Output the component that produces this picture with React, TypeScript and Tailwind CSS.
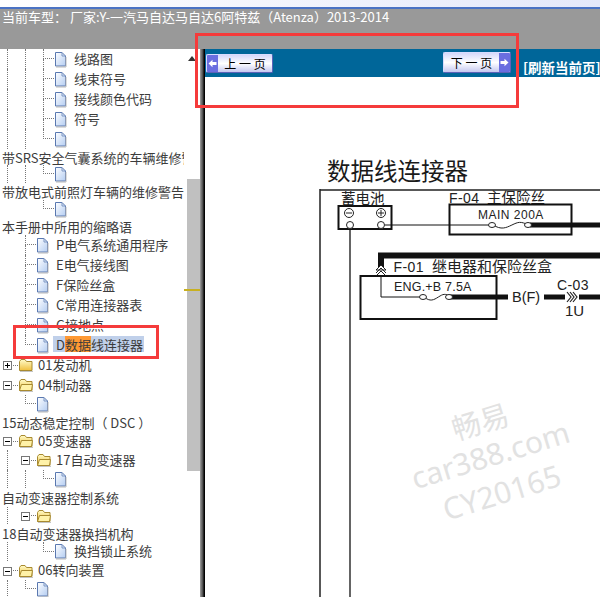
const font = { fontFamily: '"Noto Sans CJK SC", "Liberation Sans", sans-serif' };

type RowProps = {
  h: number;
  depth: number;
  guides?: number[];
  icon?: 'file' | 'closed' | 'open';
  box?: '+' | '-';
  children?: React.ReactNode;
};

function FileIcon() {
  return (
    <svg width="13" height="17" viewBox="0 0 13 17" className="shrink-0">
      <defs>
        <linearGradient id="fileFill" x1="0" y1="0" x2="1" y2="1">
          <stop offset="0" stopColor="#ffffff" />
          <stop offset="1" stopColor="#b4cdf2" />
        </linearGradient>
      </defs>
      <path d="M1.5 1.5h6.5l3.5 3.5v10h-10z" fill="url(#fileFill)" stroke="#5a78b0" strokeWidth="1" />
      <path d="M8 1.5v3.5h3.5" fill="none" stroke="#7f98c4" strokeWidth="1" />
      <path d="M2 16h10V6" fill="none" stroke="#b9b9b9" strokeWidth="1" />
    </svg>
  );
}

function FolderIcon({ open }: { open: boolean }) {
  return (
    <svg width="16" height="14" viewBox="0 0 16 14" className="shrink-0">
      <defs>
        <linearGradient id="folderFill" x1="0" y1="0" x2="0" y2="1">
          <stop offset="0" stopColor="#fffbc8" />
          <stop offset="1" stopColor="#f0c040" />
        </linearGradient>
      </defs>
      <path d="M1.5 12.5v-9l1.5-2h4l1.500 2h5.500v9z" fill="url(#folderFill)" stroke="#a88a30" strokeWidth="1" />
      {open && <path d="M1.500 12.500l2-6h11l-1 6z" fill="#fff2a8" stroke="#a88a30" strokeWidth="1" />}
      <path d="M2 13.500h13" stroke="#c4c4c4" strokeWidth="1" />
    </svg>
  );
}

function TreeRow({ h, depth, guides = [], icon = 'file', box, children }: RowProps) {
  const cells = [0, 1, 2].slice(0, depth);
  const isFolder = icon !== 'file';
  return (
    <div className="flex items-center pl-[7px] shrink-0 whitespace-nowrap" style={{ height: h }}>
      {cells.map((i) => (
        <div key={i} className={`w-[18px] h-full shrink-0 ${guides.includes(i) ? 'border-l border-dotted border-[#777]' : ''}`} />
      ))}
      {box ? (
        <div className="relative w-[11px] h-full shrink-0 flex items-center">
          <div className="w-full border-t border-dotted border-[#777]" />
          <div className="absolute left-[-4px] top-1/2 -mt-[4px] w-[9px] h-[9px] border border-[#777] bg-white flex items-center justify-center">
            <div className="w-[5px] h-px bg-black" />
            {box === '+' && <div className="absolute w-px h-[5px] bg-black" />}
          </div>
        </div>
      ) : (
        <div className="w-[11px] h-full shrink-0 flex flex-col">
          <div className="h-1/2 border-l border-b border-dotted border-[#777]" />
          {guides.includes(depth) && <div className="h-1/2 border-l border-dotted border-[#777]" />}
        </div>
      )}
      {isFolder ? <FolderIcon open={icon === 'open'} /> : <FileIcon />}
      {children && <div className={isFolder ? 'ml-[4px] -mt-[2px]' : 'ml-[7px] -mt-[2px]'}>{children}</div>}
    </div>
  );
}

function TextRow({ h, children }: { h: number; children: React.ReactNode }) {
  return (
    <div className="flex items-center pl-[2px] shrink-0 whitespace-nowrap" style={{ height: h }}>
      {children}
    </div>
  );
}

function PageButton({ dir, label }: { dir: 'prev' | 'next'; label: string }) {
  const cap = (
    <div className="w-[11px] h-full bg-[#6a6ee0] flex items-center justify-center shrink-0">
      <svg width="9" height="9" viewBox="0 0 9 9">
        {dir === 'prev' ? (
          <path d="M0.5 4.5L4.5 0.8v2.2h4v3h-4v2.2z" fill="#fff" />
        ) : (
          <path d="M8.5 4.5L4.5 0.8v2.2h-4v3h4v2.2z" fill="#fff" />
        )}
      </svg>
    </div>
  );
  return (
    <div className="h-full w-full flex border border-[#d8dcff] border-r-[#5c62b8] border-b-[#5c62b8] rounded-[2px] bg-gradient-to-b from-[#d5d8fa] via-white to-[#c5c8f0] overflow-hidden">
      {dir === 'prev' && cap}
      <div className="flex-1 flex items-center justify-center text-[12px] text-black whitespace-pre leading-none">{label}</div>
      {dir === 'next' && cap}
    </div>
  );
}

function Chevrons({ x, y }: { x: number; y: number }) {
  return (
    <g fill="none" stroke="#222" strokeWidth="1.2">
      <path d={`M${x} ${y - 5}l4 5l-4 5`} />
      <path d={`M${x + 3} ${y - 5}l4 5l-4 5`} />
      <path d={`M${x + 6} ${y - 5}l4 5l-4 5`} />
    </g>
  );
}

function Fuse({ x1, x2, y }: { x1: number; x2: number; y: number }) {
  const w = x2 - x1;
  return (
    <g fill="#fff" stroke="#222" strokeWidth="1">
      <path d={`M${x1 + 4} ${y}c${w * 0.2} 5 ${w * 0.3} 3 ${w * 0.45} 0s${w * 0.2} -4 ${w * 0.4} 0`} fill="none" />
      <ellipse cx={x1 + 3} cy={y} rx="3.5" ry="2.5" />
      <ellipse cx={x2 - 3} cy={y} rx="3.5" ry="2.5" />
    </g>
  );
}

function Diagram() {
  const t = { fontFamily: '"Liberation Sans", "Noto Sans CJK SC", sans-serif', fill: '#222' };
  return (
    <svg viewBox="205 189 395 408" width="395" height="408" className="block">
      <path d="M320 190H600M320 189V597" fill="none" stroke="#222" strokeWidth="1.5" />
      <rect x="338.5" y="206" width="53" height="23" fill="none" stroke="#111" strokeWidth="2" />
      <text x="341" y="204" fontSize="14.5" {...t}>蓄电池</text>
      <circle cx="349" cy="213" r="4.5" fill="none" stroke="#222" />
      <path d="M346 213h6" stroke="#222" />
      <circle cx="381" cy="213" r="4.5" fill="none" stroke="#222" />
      <path d="M378 213h6M381 210v6" stroke="#222" />
      <circle cx="350" cy="225" r="3.5" fill="#fff" stroke="#222" />
      <circle cx="381" cy="225" r="3.5" fill="#fff" stroke="#222" />
      <path d="M350 229V597" stroke="#111" strokeWidth="1.3" />
      <path d="M385 225H490" stroke="#111" />

      <text x="449" y="203" fontSize="14" letterSpacing="0.4" {...t}>F-04</text>
      <text x="487" y="203" fontSize="14.500" {...t}>主保险丝</text>
      <rect x="449.5" y="204.5" width="122" height="30" fill="none" stroke="#111" strokeWidth="2" />
      <text x="478" y="218.500" fontSize="12" letterSpacing="0.5" {...t}>MAIN 200A</text>
      <path d="M530 225H600" stroke="#111" strokeWidth="5" />
      <Fuse x1={489} x2={531} y={225} />

      <path d="M600 255.500H381V268" fill="none" stroke="#111" strokeWidth="6" />
      <path d="M381 265l-5 5h10zM376 273l5 -5l5 5M376 276l5 -5l5 5" fill="#fff" stroke="#222" />
      <text x="393.500" y="272" fontSize="14" letterSpacing="0.4" {...t}>F-01</text>
      <text x="432" y="272" fontSize="15" {...t}>继电器和保险丝盒</text>
      <rect x="360.500" y="276" width="136" height="43" fill="none" stroke="#111" strokeWidth="2" />
      <text x="394" y="291" fontSize="12.500" letterSpacing="0.2" {...t}>ENG.+B 7.5A</text>
      <path d="M381 277V297H421" fill="none" stroke="#111" />
      <path d="M450 297H508" stroke="#111" strokeWidth="5" />
      <Fuse x1={420} x2={452} y={297} />
      <text x="512" y="302" fontSize="14.500" {...t}>B(F)</text>
      <path d="M544 297H600" stroke="#111" strokeWidth="5" />
      <text x="557" y="290" fontSize="14" letterSpacing="0.4" {...t}>C-03</text>
      <rect x="565" y="291" width="14" height="12" fill="#fff" />
      <Chevrons x={567} y={297} />
      <text x="565" y="316" fontSize="15" {...t}>1U</text>
    </svg>
  );
}

export default function App() {
  const sel = 'bg-[#c0d0ea]';
  return (
    <div className="relative w-[600px] h-[597px] overflow-hidden bg-white text-[13px] text-[#3c3c3c] leading-none flex flex-col" style={font}>
      {/* Top strip */}
      <div className="h-[7px] bg-gradient-to-r from-white to-[#e4e8fa] shrink-0" />
      <div className="h-[2px] bg-[#4a72c4] shrink-0" />
      <div className="h-[40px] bg-[#999999] text-white pl-[2px] pt-[1px] shrink-0 whitespace-pre">
        当前车型： 厂家:Y-一汽马自达马自达6阿特兹（Atenza）2013-2014
      </div>

      <div className="flex flex-1 min-h-0">
        {/* Tree */}
        <div className="w-[184px] flex flex-col overflow-hidden shrink-0">
          <TreeRow h={20} depth={2} guides={[0, 1, 2]}>线路图</TreeRow>
          <TreeRow h={20} depth={2} guides={[0, 1, 2]}>线束符号</TreeRow>
          <TreeRow h={20} depth={2} guides={[0, 1, 2]}>接线颜色代码</TreeRow>
          <TreeRow h={20} depth={2} guides={[0, 1, 2]}>符号</TreeRow>
          <TreeRow h={20} depth={2} guides={[0, 1]} />
          <TextRow h={16}>带SRS安全气囊系统的车辆维修警告</TextRow>
          <TreeRow h={18} depth={2} guides={[0, 1]} />
          <TextRow h={17}>带放电式前照灯车辆的维修警告</TextRow>
          <TreeRow h={18} depth={2} />
          <TextRow h={17}>本手册中所用的缩略语</TextRow>
          <TreeRow h={20} depth={1} guides={[1]}>P电气系统通用程序</TreeRow>
          <TreeRow h={20} depth={1} guides={[1]}>E电气接线图</TreeRow>
          <TreeRow h={20} depth={1} guides={[1]}>F保险丝盒</TreeRow>
          <TreeRow h={20} depth={1} guides={[1]}>C常用连接器表</TreeRow>
          <TreeRow h={20} depth={1} guides={[1]}>G接地点</TreeRow>
          <TreeRow h={20} depth={1}>
            <div className={`-ml-[3px] pl-[3px] pr-[1px] h-[16px] flex items-center ${sel}`}>
              D<span className="bg-[#ff9933] h-full flex items-center">数据</span>线连接器
            </div>
          </TreeRow>
          <TreeRow h={20} depth={0} icon="closed" box="+">01发动机</TreeRow>
          <TreeRow h={20} depth={0} icon="open" box="-">04制动器</TreeRow>
          <TreeRow h={18} depth={1} />
          <TextRow h={19}>15动态稳定控制（ DSC ）</TextRow>
          <TreeRow h={18} depth={0} icon="open" box="-">05变速器</TreeRow>
          <TreeRow h={20} depth={1} guides={[0]} icon="open" box="-">17自动变速器</TreeRow>
          <TreeRow h={18} depth={2} guides={[0, 1]} />
          <TextRow h={19}>自动变速器控制系统</TextRow>
          <TreeRow h={17} depth={1} guides={[0]} icon="open" box="-" />
          <TextRow h={18}>18自动变速器换挡机构</TextRow>
          <TreeRow h={19} depth={2} guides={[0]}>换挡锁止系统</TreeRow>
          <TreeRow h={19} depth={0} icon="open" box="-">06转向装置</TreeRow>
          <TreeRow h={18} depth={1} guides={[0]} />
        </div>

        {/* Scrollbar */}
        <div className="relative w-[16px] shrink-0 bg-white flex flex-col items-center">
          <svg width="8" height="5" viewBox="0 0 8 5" className="mt-[7px] shrink-0">
            <path d="M4 0l4 5H0z" fill="#333" />
          </svg>
          <div className="ml-[3px] mt-[118px] w-[13px] h-[292px] bg-[#c0c0c0] shrink-0" />
          <div className="absolute left-0 top-[240px] w-full h-[2px] bg-[#c8b020]" />
        </div>

        {/* Splitter */}
        <div className="w-[5px] shrink-0 bg-gradient-to-r from-[#a0a0a0] via-[#555] to-black" />

        {/* Content */}
        <div className="w-[395px] shrink-0 flex flex-col">
          <div className="h-[28px] bg-[#006699] flex items-start shrink-0 whitespace-nowrap">
            <div className="ml-[1px] mt-[5px] w-[67px] h-[19px] shrink-0">
              <PageButton dir="prev" label="上 一 页" />
            </div>
            <div className="ml-[170px] mt-[3px] w-[68px] h-[21px] shrink-0">
              <PageButton dir="next" label="下 一 页" />
            </div>
            <div className="ml-[12px] mt-[12px] text-[13.5px] font-bold text-white">[刷新当前页]</div>
          </div>
          <div className="h-[112px] shrink-0 flex items-end pl-[122px] pb-[5px] text-[23.5px] text-[#1a1a1a] leading-[28px]">
            数据线连接器
          </div>
          <Diagram />
        </div>
      </div>

      {/* Annotation boxes */}
      <div className="absolute left-[195px] top-[33px] w-[324px] h-[75px] border-[3px] border-[#f53b3b]" />
      <div className="absolute left-[13px] top-[325px] w-[146px] h-[34px] border-[3px] border-[#f53b3b]" />

      {/* Watermark */}
      <div className="absolute left-[396px] top-[400px] w-[190px] flex flex-col items-center text-[#e2e2e2] -rotate-[17deg]" style={{ fontFamily: '"Noto Sans", "Noto Sans CJK SC", sans-serif' }}>
        <div className="text-[29px] leading-[36px]" style={{ fontFamily: '"Noto Sans CJK SC", sans-serif' }}>畅易</div>
        <div className="text-[30px] leading-[38px]">car388.com</div>
        <div className="text-[30px] leading-[40px]">CY20165</div>
      </div>
    </div>
  );
}
